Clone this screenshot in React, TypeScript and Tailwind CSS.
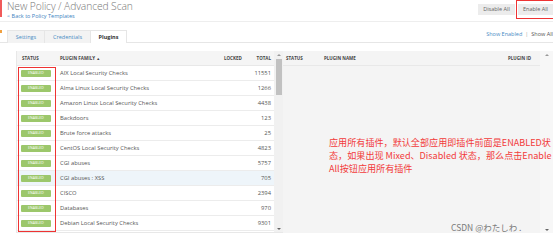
import React from "react";

// ─── data ──────────────────────────────────────────────
const families: { name: string; total: string; hl?: boolean }[] = [
  { name: "AIX Local Security Checks", total: "11551" },
  { name: "Alma Linux Local Security Checks", total: "1266" },
  { name: "Amazon Linux Local Security Checks", total: "4438" },
  { name: "Backdoors", total: "123" },
  { name: "Brute force attacks", total: "25" },
  { name: "CentOS Local Security Checks", total: "4823" },
  { name: "CGI abuses", total: "5757" },
  { name: "CGI abuses : XSS", total: "705", hl: true },
  { name: "CISCO", total: "2394" },
  { name: "Databases", total: "970" },
  { name: "Debian Local Security Checks", total: "9301" },
];

function Badge() {
  return (
    <div className="w-[30px] h-[7px] bg-[#9cc76b] rounded-[1px] flex items-center justify-center text-white text-[3.5px] leading-none tracking-wide">
      ENABLED
    </div>
  );
}

function ArrowUp() {
  return <div className="w-0 h-0 border-l-[2px] border-r-[2px] border-b-[2px] border-l-transparent border-r-transparent border-b-[#999]" />;
}

function ArrowDown() {
  return <div className="w-0 h-0 border-l-[2px] border-r-[2px] border-t-[2px] border-l-transparent border-r-transparent border-t-[#666]" />;
}

export default function App() {
  return (
    <div
      className="relative w-[553px] h-[245px] overflow-hidden bg-white text-[#555]"
      style={{ fontFamily: '"Open Sans", "Noto Sans", sans-serif' }}
    >
      {/* left edge marks */}
      <div className="absolute left-0 top-0 w-[1.5px] h-[17px] bg-[#f05a5a]" />
      <div className="absolute left-0 top-[30px] w-[2px] h-[3px] bg-[#f0a040]" />

      {/* header */}
      <div className="flex h-[22px] items-start justify-between border-b border-[#eeeeee]">
        <div className="pl-[7px]">
          <div className="text-[10.3px] leading-[12px] font-light text-[#777] tracking-[-0.1px]">
            New Policy / Advanced Scan
          </div>
          <div className="text-[5.5px] leading-[7px] mt-[1px] text-[#3b83c0]">&lt; Back to Policy Templates</div>
        </div>
        <div className="flex items-start gap-[3px] pt-[4px]">
          <div className="h-[11px] w-[37px] bg-[#ececec] flex items-center justify-center text-[5.5px] text-[#666]">
            Disable All
          </div>
          <div className="relative h-[11px] w-[35px] bg-[#ececec] flex items-center justify-center text-[5.5px] text-[#666]">
            Enable All
            <div className="absolute -left-[2px] -top-[4px] w-[40px] h-[19px] border-[1.5px] border-[#ee3333]" />
          </div>
        </div>
      </div>

      {/* tabs */}
      <div className="flex items-end justify-between h-[21px] pl-[7px] border-b border-[#e6e6e6]">
        <div className="flex h-[13px] -mb-[1px]">
          <div className="w-[37px] bg-[#f3f3f3] border-t border-l border-[#e6e6e6] flex items-center justify-center text-[5.5px] text-[#4a8cc4]">
            Settings
          </div>
          <div className="w-[46px] bg-[#f3f3f3] border-t border-l border-[#e6e6e6] flex items-center justify-center text-[5.5px] text-[#4a8cc4]">
            Credentials
          </div>
          <div className="w-[37px] bg-white border-t border-l border-r border-[#e6e6e6] flex items-center justify-center text-[5.5px] font-bold text-[#333]">
            Plugins
          </div>
        </div>
        <div className="flex items-center gap-[3px] h-[13px] pb-[3px] text-[5.5px] whitespace-nowrap">
          <span className="text-[#4a8cc4]">Show Enabled</span>
          <span className="text-[#999]">|</span>
          <span className="text-[#555]">Show All</span>
        </div>
      </div>

      {/* tables */}
      <div className="flex mt-[8px] ml-[16px] h-[182px]">
        {/* left: plugin families */}
        <div className="relative flex shrink-0 w-[267px] border-l border-b border-[#e8e8e8]">
          <div className="flex-1 flex flex-col">
            <div className="flex items-center h-[15px] bg-[#f5f5f5] border-b border-[#e8e8e8] text-[4.5px] font-bold text-[#444]">
              <div className="w-[43px] pl-[5px]">STATUS</div>
              <div className="flex-1">PLUGIN FAMILY <span className="text-[4px]">▲</span></div>
              <div className="w-[26px]">LOCKED</div>
              <div className="w-[21px] text-right">TOTAL</div>
              <div className="w-[3px]" />
            </div>
            {families.map((f, i) => (
              <div
                key={i}
                className={`flex items-center h-[15px] border-b border-[#ececec] text-[5.8px] text-[#555] ${f.hl ? "bg-[#eef5fa]" : "bg-white"}`}
              >
                <div className="w-[43px] pl-[4px]">
                  <Badge />
                </div>
                <div className="flex-1 whitespace-nowrap">{f.name}</div>
                <div className="w-[26px]" />
                <div className="w-[21px] text-right">{f.total}</div>
                <div className="w-[3px]" />
              </div>
            ))}
          </div>
          {/* scrollbar */}
          <div className="w-[9px] bg-[#f1f1f1] flex flex-col items-center">
            <div className="h-[8px] flex items-center">
              <ArrowUp />
            </div>
            <div className="w-[6px] h-[36px] bg-[#c1c1c1]" />
            <div className="flex-1" />
            <div className="h-[6px] flex items-center">
              <ArrowDown />
            </div>
          </div>
          {/* red annotation box */}
          <div className="absolute left-[1px] top-[16px] w-[38px] h-[165px] border-[1.5px] border-[#ee3333]" />
        </div>

        {/* right: plugins */}
        <div className="relative flex flex-1 min-w-0 bg-[#f4f4f4]">
          <div className="flex-1 min-w-0 flex flex-col overflow-hidden">
            <div className="flex items-center h-[15px] border-b border-[#e8e8e8] text-[4.5px] font-bold text-[#444]">
              <div className="w-[41px] pl-[3px]">STATUS</div>
              <div className="flex-1">PLUGIN NAME</div>
              <div className="w-[32px]">PLUGIN ID</div>
            </div>
          </div>
          <div className="w-[13px] shrink-0 bg-[#f7f7f7] flex flex-col items-center">
            <div className="h-[8px] flex items-center">
              <ArrowUp />
            </div>
            <div className="flex-1" />
            <div className="h-[6px] flex items-center">
              <ArrowDown />
            </div>
          </div>
          {/* annotation overlays */}
          <div
            className="absolute left-[46px] top-[85px] text-[9.1px] leading-[12.8px] text-[#f23b3b] whitespace-nowrap"
            style={{ fontFamily: '"Noto Sans CJK SC", "Noto Sans", sans-serif' }}
          >
            应用所有插件，默认全部应用即插件前面是ENABLED状
            <br />
            态，如果出现 Mixed、Disabled 状态，那么点击Enable
            <br />
            All按钮应用所有插件
          </div>
          <div
            className="absolute left-[168px] top-[172px] text-[8.5px] leading-none text-[#7a7a7a] whitespace-nowrap"
            style={{ fontFamily: '"Noto Sans CJK JP", "Noto Sans", sans-serif' }}
          >
            CSDN @わたしわ .
          </div>
        </div>
      </div>
    </div>
  );
}
